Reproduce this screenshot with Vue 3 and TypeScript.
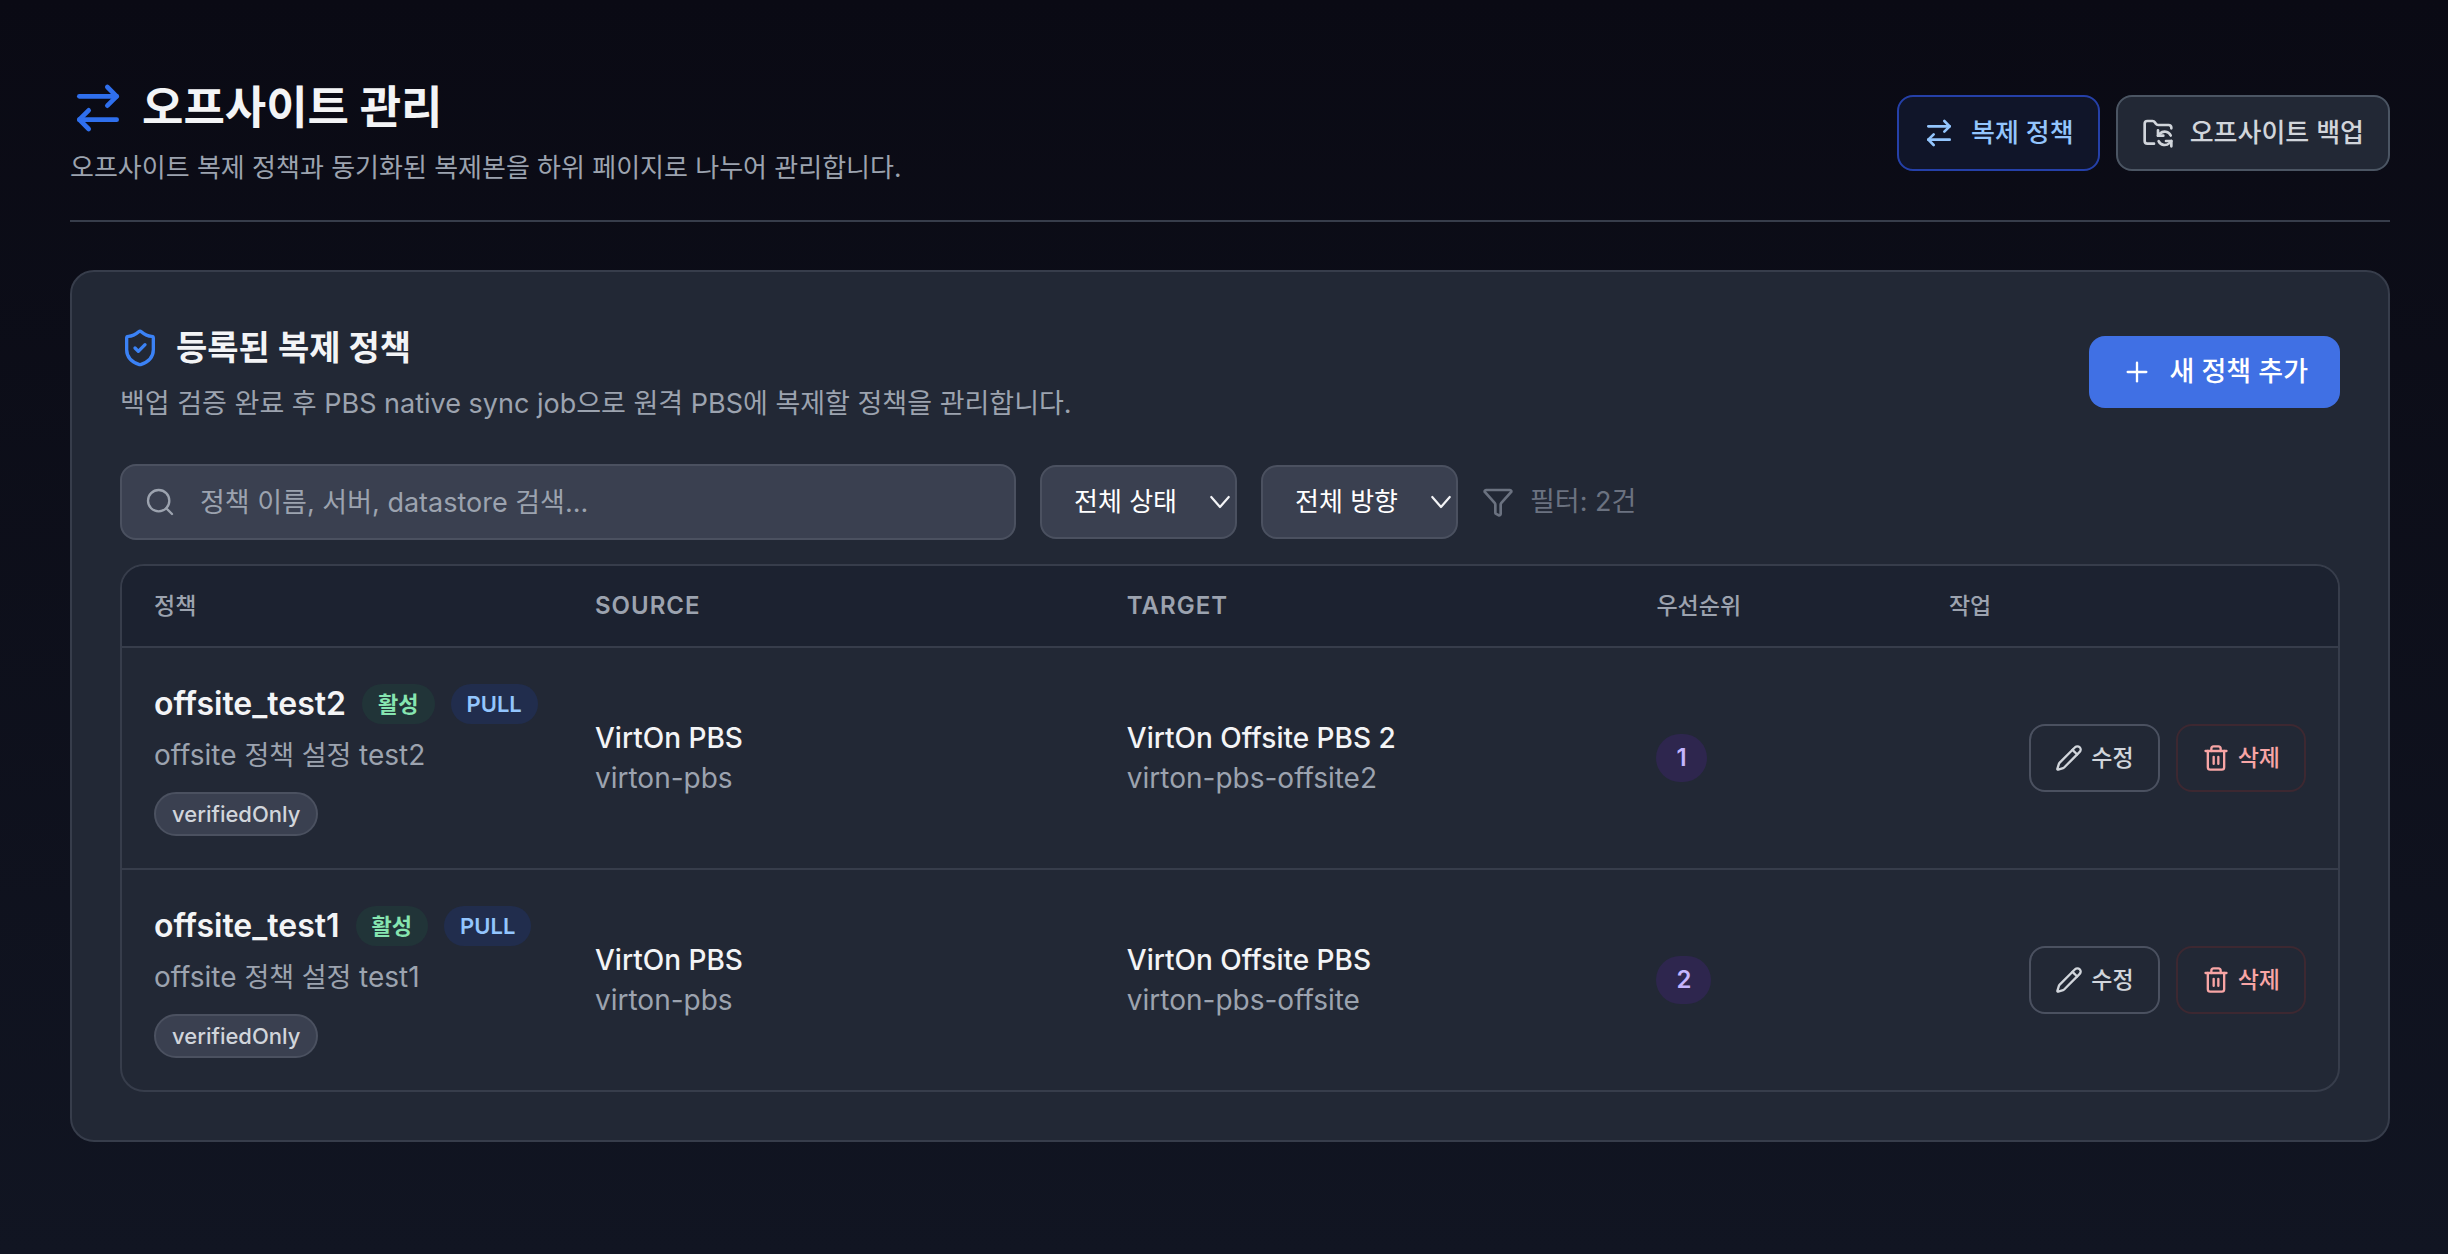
<script setup lang="ts">
import { h, ref, computed, type FunctionalComponent } from 'vue'

interface Endpoint {
  name: string
  store: string
}

interface Policy {
  name: string
  description: string
  status: string
  direction: string
  tags: string[]
  source: Endpoint
  target: Endpoint
  priority: number
}

const policies: Policy[] = [
  {
    name: 'offsite_test2',
    description: 'offsite 정책 설정 test2',
    status: '활성',
    direction: 'PULL',
    tags: ['verifiedOnly'],
    source: { name: 'VirtOn PBS', store: 'virton-pbs' },
    target: { name: 'VirtOn Offsite PBS 2', store: 'virton-pbs-offsite2' },
    priority: 1,
  },
  {
    name: 'offsite_test1',
    description: 'offsite 정책 설정 test1',
    status: '활성',
    direction: 'PULL',
    tags: ['verifiedOnly'],
    source: { name: 'VirtOn PBS', store: 'virton-pbs' },
    target: { name: 'VirtOn Offsite PBS', store: 'virton-pbs-offsite' },
    priority: 2,
  },
]

const query = ref('')
const status = ref('all')
const direction = ref('all')

const visible = computed(() =>
  policies.filter((p) => {
    const text = [p.name, p.source.name, p.source.store, p.target.name, p.target.store].join(' ').toLowerCase()
    return (
      text.includes(query.value.toLowerCase()) &&
      (status.value === 'all' || p.status === status.value) &&
      (direction.value === 'all' || p.direction === direction.value)
    )
  }),
)

const icons: Record<string, string[]> = {
  swap: ['m16 3 4 4-4 4', 'M20 7H4', 'm8 21-4-4 4-4', 'M4 17h16'],
  folderSync: [
    'M9 20H4a2 2 0 0 1-2-2V5a2 2 0 0 1 2-2h3.9a2 2 0 0 1 1.69.9l.81 1.2a2 2 0 0 0 1.67.9H20a2 2 0 0 1 2 2v.5',
    'M12 10v4h4',
    'm12 14 1.535-1.605a5 5 0 0 1 8 1.5',
    'M22 22v-4h-4',
    'm22 18-1.535 1.605a5 5 0 0 1-8-1.5',
  ],
  shield: [
    'M20 13c0 5-3.5 7.5-7.66 8.95a1 1 0 0 1-.67-.01C7.5 20.5 4 18 4 13V6a1 1 0 0 1 1-1c2 0 4.5-1.2 6.24-2.72a1.17 1.17 0 0 1 1.52 0C14.51 3.81 17 5 19 5a1 1 0 0 1 1 1z',
    'm9 12 2 2 4-4',
  ],
  plus: ['M5 12h14', 'M12 5v14'],
  search: ['M19 11a8 8 0 1 1-16 0 8 8 0 0 1 16 0z', 'm21 21-4.34-4.34'],
  funnel: [
    'M10 20a1 1 0 0 0 .553.895l2 1A1 1 0 0 0 14 21v-7a2 2 0 0 1 .517-1.341L21.74 4.67A1 1 0 0 0 21 3H3a1 1 0 0 0-.742 1.67l7.225 7.989A2 2 0 0 1 10 14z',
  ],
  chevron: ['m5 8 7 8 7-8'],
  pencil: [
    'M21.174 6.812a1 1 0 0 0-3.986-3.987L3.842 16.174a2 2 0 0 0-.5.83l-1.321 4.352a.5.5 0 0 0 .623.622l4.353-1.32a2 2 0 0 0 .83-.497z',
    'm15 5 4 4',
  ],
  trash: [
    'M3 6h18',
    'M19 6v14a2 2 0 0 1-2 2H7a2 2 0 0 1-2-2V6',
    'M8 6V4a2 2 0 0 1 2-2h4a2 2 0 0 1 2 2v2',
    'M10 11v6',
    'M14 11v6',
  ],
}

const Icon: FunctionalComponent<{ name: string; size: number; stroke?: number }> = (props) =>
  h(
    'svg',
    {
      width: props.size,
      height: props.size,
      viewBox: '0 0 24 24',
      fill: 'none',
      stroke: 'currentColor',
      'stroke-width': props.stroke ?? 2,
      'stroke-linecap': 'round',
      'stroke-linejoin': 'round',
      'aria-hidden': 'true',
    },
    icons[props.name].map((d) => h('path', { d })),
  )
Icon.props = ['name', 'size', 'stroke']

// Latin runs are set a step larger than the Hangul around them.
const Mixed: FunctionalComponent<{ text: string }> = (props) =>
  props.text
    .split(/([\x21-\x7e]*[A-Za-z0-9][\x20-\x7e]*)/)
    .filter(Boolean)
    .map((part) => (/[A-Za-z0-9]/.test(part) ? h('span', { class: 'latin' }, part) : part))
Mixed.props = ['text']
</script>

<template>
  <main class="page">
    <header class="page-head">
      <div>
        <h1><Icon name="swap" :size="56" />오프사이트 관리</h1>
        <p class="lead">오프사이트 복제 정책과 동기화된 복제본을 하위 페이지로 나누어 관리합니다.</p>
      </div>
      <nav class="tabs">
        <a href="#policies" class="tab active" aria-current="page"><Icon name="swap" :size="32" />복제 정책</a>
        <a href="#backups" class="tab"><Icon name="folderSync" :size="32" />오프사이트 백업</a>
      </nav>
    </header>

    <section class="card">
      <div class="card-head">
        <div>
          <h2><Icon name="shield" :size="40" />등록된 복제 정책</h2>
          <p class="sub">백업 검증 완료 후 PBS native sync job으로 원격 PBS에 복제할 정책을 관리합니다.</p>
        </div>
        <button type="button" class="add"><Icon name="plus" :size="32" :stroke="1.75" />새 정책 추가</button>
      </div>

      <div class="filters">
        <label class="search">
          <Icon name="search" :size="32" :stroke="1.75" />
          <input v-model="query" type="text" aria-label="정책 검색" placeholder="정책 이름, 서버, datastore 검색..." />
        </label>
        <div class="select">
          <select v-model="status" aria-label="상태">
            <option value="all">전체 상태</option>
            <option value="활성">활성</option>
          </select>
          <Icon name="chevron" :size="30" :stroke="1.75" />
        </div>
        <div class="select">
          <select v-model="direction" aria-label="방향">
            <option value="all">전체 방향</option>
            <option value="PULL">PULL</option>
          </select>
          <Icon name="chevron" :size="30" :stroke="1.75" />
        </div>
        <span class="count"><Icon name="funnel" :size="32" />필터: {{ visible.length }}건</span>
      </div>

      <div class="table-wrap">
        <table>
          <colgroup>
            <col class="c-policy" />
            <col class="c-source" />
            <col class="c-target" />
            <col class="c-prio" />
            <col />
          </colgroup>
          <thead>
            <tr>
              <th scope="col">정책</th>
              <th scope="col" class="en">SOURCE</th>
              <th scope="col" class="en">TARGET</th>
              <th scope="col">우선순위</th>
              <th scope="col">작업</th>
            </tr>
          </thead>
          <tbody>
            <tr v-for="p in visible" :key="p.name">
              <td>
                <div class="title">
                  <strong>{{ p.name }}</strong>
                  <span class="badge on">{{ p.status }}</span>
                  <span class="badge dir">{{ p.direction }}</span>
                </div>
                <p class="sub"><Mixed :text="p.description" /></p>
                <div class="tags">
                  <span v-for="t in p.tags" :key="t" class="tag">{{ t }}</span>
                </div>
              </td>
              <td>
                <div class="ep-name">{{ p.source.name }}</div>
                <div class="ep-store">{{ p.source.store }}</div>
              </td>
              <td>
                <div class="ep-name">{{ p.target.name }}</div>
                <div class="ep-store">{{ p.target.store }}</div>
              </td>
              <td><span class="prio">{{ p.priority }}</span></td>
              <td>
                <div class="actions">
                  <button type="button" class="act"><Icon name="pencil" :size="28" />수정</button>
                  <button type="button" class="act danger"><Icon name="trash" :size="28" />삭제</button>
                </div>
              </td>
            </tr>
          </tbody>
        </table>
      </div>
    </section>
  </main>
</template>

<style>
body {
  margin: 0;
  background: #0a0a14;
}
</style>

<style scoped>
.page {
  box-sizing: border-box;
  min-height: 100vh;
  padding: 78px 58px 64px 70px;
  background: linear-gradient(180deg, #0a0a14, #111522);
  color: #f3f4f6;
  font-family: Inter, 'Noto Sans CJK KR', sans-serif;
  font-size: 26px;
  line-height: 40px;
}
.page :deep(svg) {
  flex: none;
  display: block;
}
h1,
h2,
p {
  margin: 0;
}
button,
input,
select {
  font: inherit;
  color: inherit;
  margin: 0;
}
.page-head {
  display: flex;
  justify-content: space-between;
  align-items: center;
  padding-bottom: 32px;
  border-bottom: 2px solid #373d4b;
}
h1 {
  display: flex;
  align-items: center;
  gap: 16px;
  font-size: 45px;
  line-height: 60px;
  font-weight: 700;
}
h1 :deep(svg) {
  color: #2f6fed;
}
.lead {
  margin-top: 10px;
  color: #9ca3af;
}
.sub {
  margin-top: 8px;
  color: #9ca3af;
  font-size: 27px;
}
:deep(.latin) {
  font-size: 28px;
  line-height: 1;
}
.tabs {
  display: flex;
  gap: 16px;
}
.tab {
  display: flex;
  align-items: center;
  gap: 16px;
  padding: 16px 24px;
  border: 2px solid #4b5563;
  border-radius: 16px;
  background: #222835;
  color: #d1d5db;
  font-weight: 500;
  text-decoration: none;
}
.tab.active {
  border-color: #2540a8;
  background: #101529;
  color: #93c5fd;
}
.card {
  margin-top: 48px;
  padding: 48px;
  border: 2px solid #373d4b;
  border-radius: 24px;
  background: #222835;
}
.card-head {
  display: flex;
  justify-content: space-between;
  align-items: center;
}
h2 {
  display: flex;
  align-items: center;
  gap: 16px;
  font-size: 34px;
  line-height: 56px;
  font-weight: 700;
}
h2 :deep(svg) {
  color: #3b82f6;
}
.add {
  display: flex;
  align-items: center;
  gap: 16px;
  padding: 16px 32px;
  border: 0;
  border-radius: 16px;
  background: #4070e4;
  color: #fff;
  font-size: 27px;
  font-weight: 500;
}
.filters {
  display: flex;
  align-items: center;
  gap: 24px;
  margin-top: 40px;
}
.search {
  box-sizing: border-box;
  display: flex;
  align-items: center;
  gap: 24px;
  width: 896px;
  padding: 0 22px;
  border: 2px solid #4b5160;
  border-radius: 16px;
  background: #3a4050;
  color: #9ca3af;
}
.search input {
  flex: 1;
  min-width: 0;
  height: 72px;
  padding: 0;
  border: 0;
  outline: 0;
  background: none;
  color: #f3f4f6;
  font-size: 27px;
}
.search input::placeholder {
  color: #9ca3af;
  opacity: 1;
}
.select {
  position: relative;
}
.select select {
  appearance: none;
  box-sizing: border-box;
  display: block;
  width: 197px;
  height: 74px;
  padding: 0 32px;
  border: 2px solid #4b5160;
  border-radius: 16px;
  background: #3a4050;
  color: #fff;
}
.select :deep(svg) {
  position: absolute;
  right: 2px;
  top: 22px;
  pointer-events: none;
}
.count {
  display: flex;
  align-items: center;
  gap: 16px;
  color: #6b7280;
  font-size: 27px;
}
.table-wrap {
  margin-top: 24px;
  border: 2px solid #373d4b;
  border-radius: 24px;
  overflow: hidden;
}
table {
  width: 100%;
  table-layout: fixed;
  border-collapse: separate;
  border-spacing: 0;
}
.c-policy {
  width: 19.9%;
}
.c-source {
  width: 24%;
}
.c-target {
  width: 23.9%;
}
.c-prio {
  width: 13.2%;
}
th {
  padding: 20px 0 20px 32px;
  border-bottom: 2px solid #373d4b;
  background: #1c2230;
  color: #9ca3af;
  font-size: 23px;
  font-weight: 500;
  text-align: left;
}
th.en {
  font-size: 24px;
  font-weight: 600;
  letter-spacing: 1px;
}
td {
  padding: 32px 0 32px 32px;
  vertical-align: middle;
}
tr:not(:last-child) td {
  border-bottom: 2px solid #373d4b;
}
td:last-child {
  padding-right: 32px;
}
.title {
  display: flex;
  align-items: center;
  gap: 16px;
  height: 48px;
  white-space: nowrap;
}
.title strong {
  font-size: 32px;
  font-weight: 600;
}
.badge {
  padding: 0 16px;
  border-radius: 20px;
  font-size: 22px;
  font-weight: 600;
}
.badge.on {
  background: #213438;
  color: #86e5b0;
}
.badge.dir {
  background: #212d4d;
  color: #93c5fd;
}
.tags {
  display: flex;
  gap: 8px;
  margin-top: 16px;
}
.tag {
  padding: 0 16px;
  border: 2px solid #4b5160;
  border-radius: 24px;
  background: #3a4050;
  color: #d1d5db;
  font-size: 22px;
  font-weight: 500;
}
.ep-name,
.ep-store {
  font-size: 28px;
}
.ep-name {
  font-weight: 500;
}
.ep-store {
  color: #9ca3af;
}
.prio {
  display: inline-block;
  padding: 0 20px;
  border-radius: 24px;
  background: #2e264e;
  color: #c4b5fd;
  font-size: 24px;
  line-height: 48px;
  font-weight: 600;
}
.actions {
  display: flex;
  justify-content: flex-end;
  gap: 16px;
}
.act {
  display: flex;
  align-items: center;
  gap: 8px;
  padding: 12px 24px;
  border: 2px solid #4b5160;
  border-radius: 16px;
  background: none;
  color: #d1d5db;
  font-size: 23px;
  font-weight: 500;
}
.act.danger {
  border-color: #3d2831;
  color: #f8a5a5;
}
</style>
